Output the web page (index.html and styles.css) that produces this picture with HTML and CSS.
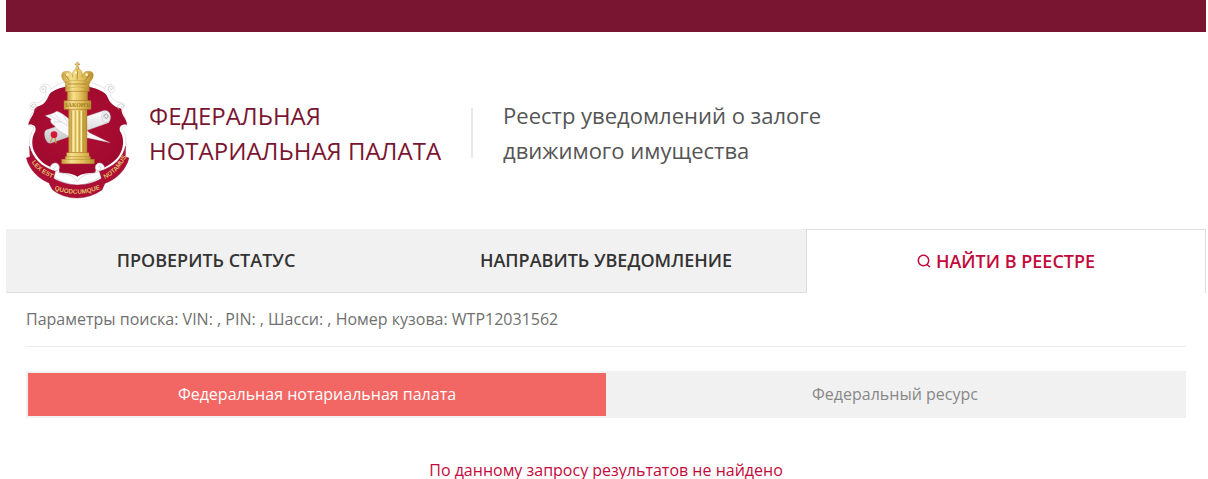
FILE: index.html
```html
<!DOCTYPE html>
<html lang="ru">
<head>
    <meta charset="UTF-8">
    <meta name="viewport" content="width=device-width, initial-scale=1.0">
    <title>Реестр уведомлений о залоге движимого имущества</title>
    <link rel="stylesheet" href="styles.css">
</head>
<body>

<div class="topbar"></div>

<header class="header">
    <a href="#" class="brand">
        <svg class="emblem" viewBox="30 15 312 414" role="img" aria-label="Герб Федеральной нотариальной палаты">
            <defs>
                <linearGradient id="gold" x1="0" x2="1" y1="0" y2="0">
                    <stop offset="0" stop-color="#c79c3c"/>
                    <stop offset=".3" stop-color="#f6e08c"/>
                    <stop offset=".65" stop-color="#e2c05a"/>
                    <stop offset="1" stop-color="#b88d30"/>
                </linearGradient>
                <radialGradient id="red" cx=".5" cy=".45" r=".6">
                    <stop offset="0" stop-color="#b30d34"/>
                    <stop offset="1" stop-color="#9c0a2d"/>
                </radialGradient>
                <linearGradient id="paper" x1="0" x2="0" y1="0" y2="1">
                    <stop offset="0" stop-color="#fff"/>
                    <stop offset="1" stop-color="#c4c4c8"/>
                </linearGradient>
                <path id="mottoLeft" d="M42 312 C56 336 80 356 116 370"/>
                <path id="mottoMid" d="M108 398 Q184 430 260 396"/>
                <path id="mottoRight" d="M260 372 C292 358 318 334 334 294"/>
            </defs>

            <!-- shield -->
            <path fill="#fff" stroke="#d6d6da" stroke-width="2" d="M184 76 C155 72 128 82 106 98 C100 80 76 80 72 96 C70 110 84 114 90 106 C92 124 78 136 64 142 C54 134 38 140 42 156 C46 164 54 160 54 160 C48 178 36 190 38 210 C46 208 54 212 52 220 C40 238 38 262 44 284 C54 316 76 338 104 350 C130 364 154 378 184 392 C214 378 240 364 266 350 C294 338 318 316 326 284 C332 262 332 238 318 220 C316 212 324 208 332 210 C334 190 322 178 318 160 C328 158 330 140 314 140 C296 138 282 126 282 108 C290 112 300 106 296 94 C290 80 270 82 266 98 C240 82 214 72 184 76Z"/>
            <path fill="url(#red)" d="M184 90 C148 88 120 98 104 110 C98 114 96 130 84 142 C76 150 62 150 56 158 C54 178 40 188 37 206 C54 204 62 212 58 226 C46 246 48 266 52 280 C62 306 82 326 106 334 C122 330 132 338 130 350 C150 350 170 352 184 362 C200 350 218 352 238 350 C238 336 250 328 266 334 C290 322 310 306 318 280 C324 260 322 240 312 226 C308 212 316 204 333 206 C332 188 316 178 316 158 C296 154 282 142 276 126 C272 114 264 108 254 104 C234 94 212 90 184 90Z"/>

            <!-- curls at the shield edge -->
            <g fill="none" stroke="#b9b9be" stroke-width="2" stroke-linecap="round">
                <path d="M88 106 C96 92 84 86 78 94 C76 102 84 104 84 98"/>
                <path d="M60 158 C66 142 50 140 46 150 C46 156 54 156 54 151"/>
                <path d="M280 106 C270 94 282 84 290 94 C292 102 284 104 284 98"/>
                <path d="M308 160 C298 144 316 140 324 148 C324 156 316 156 316 151"/>
            </g>
            <g fill="#fff" stroke="#c4c4c8" stroke-width="2">
                <path d="M104 350 C98 332 108 318 122 322 C134 328 132 346 120 344 C132 358 164 346 184 376 C204 346 236 358 248 344 C236 346 234 328 246 322 C260 318 270 332 264 350 C256 366 222 384 184 388 C146 384 112 366 104 350Z"/>
                <path fill="none" d="M120 344 C110 342 112 330 120 332 M248 344 C258 342 256 330 248 332"/>
            </g>

            <!-- feather and rolled deed -->
            <g stroke="#a8a8ad" stroke-width="1">
                <path fill="url(#paper)" d="M90 222 L262 164 C280 160 290 186 278 200 L104 262 C88 264 80 230 90 222Z"/>
                <ellipse cx="270" cy="182" rx="13" ry="18" fill="#ededf0"/>
                <path fill="none" stroke="#77777d" stroke-width="2" d="M264 184 C262 174 274 170 276 180 C276 188 268 190 268 184"/>
                <path fill="#f9f9fb" d="M88 179 C102 176 112 172 122 166 C138 170 150 182 160 190 C184 202 206 214 220 230 L282 260 L216 246 C194 252 172 248 152 238 C134 228 122 220 114 208 C106 204 100 194 106 190Z"/>
                <path fill="none" d="M100 178 C134 196 174 222 220 238 M116 174 L134 192 M112 198 L136 198 M142 178 L158 204"/>
            </g>
            <path fill="none" stroke="#c99835" stroke-width="4" d="M112 240 L103 258 M116 240 L120 262"/>
            <circle cx="114" cy="236" r="10" fill="#d5173b"/>

            <!-- column -->
            <g fill="url(#gold)" stroke="#b08629" stroke-width="1">
                <path d="M148 88 H220 V106 H148Z"/>
                <path d="M154 106 H215 V134 H154Z"/>
                <path d="M144 134 H225 V160 H144Z"/>
                <path d="M158 160 H213 V290 H158Z"/>
                <path d="M152 290 H219 V302 H223 V310 H235 V323 H137 V310 H148 V302 H152Z"/>
            </g>
            <g stroke="#b58c34" stroke-width="2">
                <path d="M166 164 V288 M178 164 V288 M190 164 V288 M202 164 V288 M148 302 H223 M148 310 H223"/>
            </g>
            <g stroke="#fbedae" stroke-width="4">
                <path d="M172 164 V288 M184 164 V288 M196 164 V288"/>
            </g>
            <text class="emblem-law" x="184" y="153">ЗАКОНЪ</text>

            <!-- crown -->
            <g fill="url(#gold)" stroke="#a67d26" stroke-width="1">
                <path d="M150 82 C128 62 136 42 156 46 C166 46 170 56 170 64 C166 46 176 38 184 38 C194 38 202 46 198 64 C198 54 206 46 214 46 C234 42 240 62 218 82Z"/>
                <path d="M147 78 Q184 68 221 78 L217 97 Q184 88 151 97Z"/>
                <circle cx="184" cy="36" r="5"/>
                <path d="M182 31 V27 H177 V23 H182 V18 H186 V23 H191 V27 H186 V31Z"/>
            </g>
            <path fill="none" stroke="#96701f" stroke-width="2" d="M148 56 L160 74 M220 56 L208 74 M184 44 V70 M156 84 H212"/>
            <g fill="#fff3bc">
                <circle cx="154" cy="56" r="4"/>
                <circle cx="179" cy="50" r="4"/>
                <circle cx="212" cy="56" r="4"/>
            </g>

            <!-- ribbon -->
            <g fill="#ad1034" stroke="#8a0a2a" stroke-width="1">
                <path d="M40 270 C50 306 74 332 118 346 L108 384 C70 372 40 342 31 306 L42 302Z"/>
                <path d="M329 270 C320 306 296 332 250 346 L262 384 C300 372 330 342 339 306 L328 302Z"/>
                <path d="M101 360 C154 396 216 396 268 360 L266 384 L258 402 C212 434 152 434 110 402 L100 384Z"/>
            </g>
            <g class="emblem-motto">
                <text><textPath href="#mottoLeft" startOffset="50%">LEX EST</textPath></text>
                <text><textPath href="#mottoMid" startOffset="50%">QUODCUMQUE</textPath></text>
                <text><textPath href="#mottoRight" startOffset="50%">NOTAMUS</textPath></text>
            </g>
        </svg>
        <span class="brand-name">ФЕДЕРАЛЬНАЯ<br>НОТАРИАЛЬНАЯ ПАЛАТА</span>
    </a>
    <h1 class="title">Реестр уведомлений о залоге<br>движимого имущества</h1>
</header>

<nav class="tabs">
    <a href="#" class="tab">ПРОВЕРИТЬ СТАТУС</a>
    <a href="#" class="tab">НАПРАВИТЬ УВЕДОМЛЕНИЕ</a>
    <a href="#" class="tab active">
        <svg class="search-icon" viewBox="0 0 14 14" aria-hidden="true">
            <circle cx="6.500" cy="6.500" r="5.200"/>
            <path d="M10 10.500 L13 13"/>
        </svg>
        НАЙТИ В РЕЕСТРЕ
    </a>
</nav>

<main class="content">
    <p class="params">Параметры поиска: VIN: , PIN: , Шасси: , Номер кузова: WTP12031562</p>

    <div class="switch">
        <button type="button" class="switch-btn selected">Федеральная нотариальная палата</button>
        <button type="button" class="switch-btn">Федеральный ресурс</button>
    </div>

    <p class="message">По данному запросу результатов не найдено</p>
</main>

</body>
</html>
```
FILE: styles.css
```css
* {
    box-sizing: border-box;
}
body {
    margin: 0 2px 0 6px;
    font-family: "Open Sans", sans-serif;
    font-size: 16px;
    line-height: 24px;
    color: #707070;
    background: #fff;
}
a {
    text-decoration: none;
}
.topbar {
    height: 32px;
    background: #7a1531;
}
.header {
    display: flex;
    align-items: center;
    padding: 29px 20px 30px;
}
.brand {
    display: flex;
    align-items: center;
    color: #7a1531;
}
.emblem {
    width: 104px;
    height: 138px;
    margin-right: 19px;
}
.emblem-law {
    font: bold 18px "Liberation Serif", serif;
    fill: #a57c22;
    text-anchor: middle;
}
.emblem-motto {
    font: bold 19px "Liberation Sans", sans-serif;
    fill: #e3bd6a;
    text-anchor: middle;
}
.brand-name {
    padding-top: 6px;
    font-size: 24px;
    line-height: 35px;
}
.title {
    margin: 6px 0 0 30px;
    padding-left: 32px;
    font-size: 22px;
    font-weight: normal;
    line-height: 35px;
    color: #555;
    background: linear-gradient(#e8e8e8, #e8e8e8) left center / 2px 50px no-repeat;
}
.tabs {
    display: grid;
    grid-template-columns: repeat(3, 1fr);
}
.tab {
    display: flex;
    align-items: center;
    justify-content: center;
    gap: 5px;
    height: 64px;
    padding-bottom: 2px;
    font-size: 18px;
    font-weight: 600;
    color: #333;
    background: #f1f1f1;
    border-bottom: 1px solid #ddd;
}
.tab.active {
    color: #c3093b;
    background: #fff;
    border: 1px solid #ddd;
    border-bottom: none;
}
.search-icon {
    width: 14px;
    height: 14px;
    fill: none;
    stroke: currentColor;
    stroke-width: 1.5;
}
.content {
    padding: 0 20px;
}
.params {
    margin: 0 0 24px;
    padding: 14px 0 15px;
    border-bottom: 1px solid #ececec;
}
.switch {
    display: grid;
    grid-template-columns: 1fr 1fr;
    padding: 2px;
    background: #f1f1f1;
}
.switch-btn {
    height: 43px;
    padding: 0 0 2px;
    border: none;
    background: none;
    font: inherit;
    color: #888;
    cursor: pointer;
}
.switch-btn.selected {
    color: #fff;
    background: #f26763;
}
.message {
    margin: 43px 0 0;
    text-align: center;
    line-height: 18px;
    color: #c3093b;
}
```
